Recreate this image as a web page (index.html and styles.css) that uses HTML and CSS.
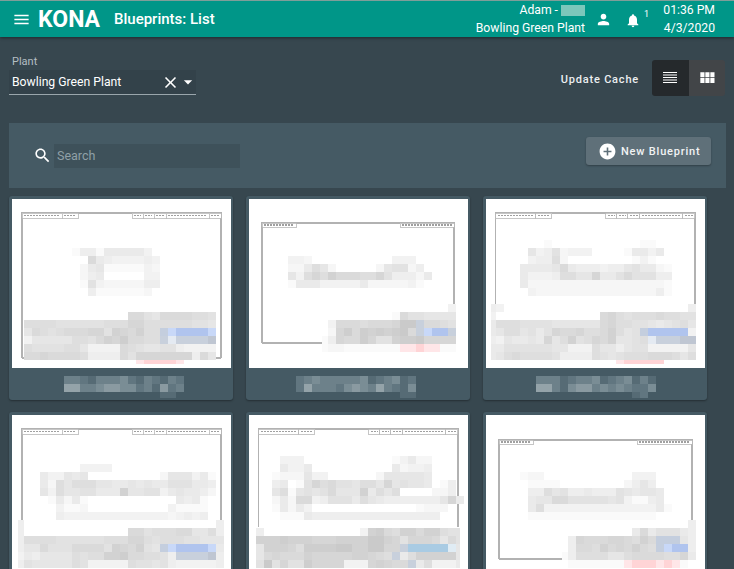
FILE: index.html
```html
<!DOCTYPE html>
<html lang="en">
<head>
<meta charset="utf-8">
<title>KONA Blueprints: List</title>
<link rel="stylesheet" href="styles.css">
</head>
<body>
<header class="appbar">
  <svg class="icon icon-menu" viewBox="0 0 24 24"><path d="M3 18h18v-2H3v2zm0-5h18v-2H3v2zm0-7v2h18V6H3z"/></svg>
  <span class="logo">KONA</span>
  <span class="page-title">Blueprints: List</span>
  <div class="user">
    <div class="user-name">Adam - <span class="redacted"></span></div>
    <div>Bowling Green Plant</div>
  </div>
  <svg class="icon icon-person" viewBox="0 0 24 24"><path d="M12 12c2.21 0 4-1.79 4-4s-1.79-4-4-4-4 1.79-4 4 1.79 4 4 4zm0 2c-2.67 0-8 1.34-8 4v2h16v-2c0-2.66-5.33-4-8-4z"/></svg>
  <div class="bell">
    <svg class="icon icon-bell" viewBox="0 0 24 24"><path d="M12 22c1.1 0 2-.9 2-2h-4c0 1.1.9 2 2 2zm6-6v-5c0-3.07-1.63-5.64-4.5-6.32V4c0-.83-.67-1.5-1.5-1.5s-1.5.67-1.5 1.5v.68C7.64 5.36 6 7.92 6 11v5l-2 2v1h16v-1l-2-2z"/></svg>
    <span class="bell-count">1</span>
  </div>
  <div class="clock">
    <div>01:36 PM</div>
    <div>4/3/2020</div>
  </div>
</header>

<main class="content">
  <section class="toolbar">
    <div class="plant">
      <label class="plant-label">Plant</label>
      <div class="plant-select">
        <span class="plant-value">Bowling Green Plant</span>
        <svg class="icon icon-close" viewBox="0 0 24 24"><path d="M19 6.41L17.59 5 12 10.59 6.41 5 5 6.41 10.59 12 5 17.59 6.41 19 12 13.41 17.59 19 19 17.59 13.41 12z"/></svg>
        <svg class="icon icon-caret" viewBox="0 0 24 24"><path d="M7 10l5 5 5-5z"/></svg>
      </div>
    </div>
    <span class="update-cache">Update Cache</span>
    <div class="toggle">
      <span class="toggle-btn toggle-active"><svg class="icon icon-list" viewBox="0 0 14 11"><path d="M0 0h14v1H0zM0 2.5h14v1H0zM0 5h14v1H0zM0 7.5h14v1H0zM0 10h14v1H0z"/></svg></span>
      <span class="toggle-btn"><svg class="icon icon-grid" viewBox="0 0 24 24"><path d="M4 11h5V5H4v6zm0 7h5v-6H4v6zm6 0h5v-6h-5v6zm6 0h5v-6h-5v6zm-6-7h5V5h-5v6zm6-6v6h5V5h-5z"/></svg></span>
    </div>
  </section>

  <section class="panel">
    <svg class="icon icon-search" viewBox="0 0 24 24"><path d="M15.5 14h-.79l-.28-.27C15.41 12.59 16 11.11 16 9.5 16 5.91 13.09 3 9.5 3S3 5.91 3 9.5 5.91 16 9.5 16c1.61 0 3.09-.59 4.23-1.57l.27.28v.79l5 4.99L20.49 19l-4.99-5zm-6 0C7.01 14 5 11.99 5 9.5S7.01 5 9.5 5 14 7.01 14 9.5 11.99 14 9.5 14z"/></svg>
    <div class="search-box">Search</div>
    <button class="new-btn" type="button">
      <svg class="icon icon-add" viewBox="0 0 24 24"><path d="M12 2C6.48 2 2 6.48 2 12s4.48 10 10 10 10-4.48 10-10S17.52 2 12 2zm5 11h-4v4h-2v-4H7v-2h4V7h2v4h4v2z"/></svg>
      New Blueprint
    </button>
  </section>

  <section class="grid" id="grid">
    <article class="card"><div class="card-image"></div><div class="card-title"></div></article>
    <article class="card"><div class="card-image"></div><div class="card-title"></div></article>
    <article class="card"><div class="card-image"></div><div class="card-title"></div></article>
    <article class="card"><div class="card-image"></div><div class="card-title"></div></article>
    <article class="card"><div class="card-image"></div><div class="card-title"></div></article>
    <article class="card"><div class="card-image"></div><div class="card-title"></div></article>
  </section>
</main>
<script src="script.js"></script>
</body>
</html>
```

FILE: styles.css
```css
* { box-sizing: border-box; }
html, body { height: 100%; overflow: hidden; }
body {
  margin: 0;
  background: #37474f;
  color: #fff;
  font-family: Roboto, "Liberation Sans", sans-serif;
}
.icon { display: block; fill: currentColor; flex: none; }

.appbar {
  display: flex;
  align-items: center;
  height: 37px;
  padding-left: 12px;
  background: #009688;
  border-top: 1px solid #7f9e99;
  box-shadow: 0 1px 3px rgba(0, 0, 0, .45);
  position: relative;
}
.icon-menu { width: 19px; height: 19px; }
.logo { margin-left: 7px; font-size: 23px; font-weight: 700; line-height: 1; }
.page-title { margin-left: 14px; font-size: 15px; font-weight: 500; }
.user { margin-left: auto; text-align: right; font-size: 12.2px; line-height: 18px; }
.user-name { display: flex; justify-content: flex-end; align-items: center; }
.redacted { width: 24px; height: 11px; margin-left: 3px; background: #7cc7bb; }
.icon-person { width: 17px; height: 17px; margin-left: 10px; }
.bell { display: flex; margin-left: 13px; width: 32px; }
.icon-bell { width: 16px; height: 17px; margin-top: 3px; }
.bell-count { margin-left: 3px; font-size: 9px; }
.clock { width: 58px; margin-right: 19px; text-align: right; font-size: 12.2px; line-height: 18px; }

.content { padding: 0 8px 0 9px; }

.toolbar { display: flex; align-items: center; height: 86px; padding-bottom: 5px; }
.plant { width: 187px; align-self: flex-start; margin-top: 18px; }
.plant-label { display: block; padding-left: 3px; font-size: 11px; line-height: 14px; color: #b4bec3; }
.plant-select {
  display: flex;
  align-items: center;
  height: 25px;
  margin-top: 1px;
  padding-left: 3px;
  background: #33424a;
  border-bottom: 1px solid #9aa6ac;
}
.plant-value { flex: 1; font-size: 12.2px; }
.icon-close { width: 19px; height: 19px; margin-right: -2px; }
.icon-caret { width: 20px; height: 20px; margin-right: -2px; }
.update-cache { margin: 3px 0 0 auto; font-size: 11px; font-weight: 500; letter-spacing: .8px; color: #eceff1; }
.toggle { display: flex; margin: 0 1px 0 13px; border-radius: 3px; overflow: hidden; }
.toggle-btn { display: flex; align-items: center; justify-content: center; width: 36.5px; height: 36px; background: #424548; }
.toggle-active { background: #25292c; }
.icon-list { width: 14px; height: 11px; }
.icon-grid { width: 20px; height: 20px; }

.panel {
  display: flex;
  align-items: center;
  height: 65px;
  padding: 0 15px 0 24px;
  background: #455a64;
}
.icon-search { width: 19px; height: 19px; color: #fff; }
.search-box {
  width: 186px;
  height: 24px;
  margin-left: 2px;
  padding-left: 3px;
  background: #3e515a;
  color: #90a0a7;
  font-size: 12.5px;
  line-height: 24px;
}
.new-btn {
  display: flex;
  align-items: center;
  gap: 4px;
  height: 28px;
  margin: -9px 0 0 auto;
  width: 125px;
  padding: 0 0 0 12px;
  border: 0;
  border-radius: 3px;
  background: #5f7079;
  box-shadow: 0 1px 2px rgba(0, 0, 0, .3);
  color: #f1f3f4;
  font: 500 11px Roboto, "Liberation Sans", sans-serif;
  letter-spacing: .8px;
}
.icon-add { width: 19px; height: 19px; color: #fff; }

.grid {
  display: grid;
  grid-template-columns: repeat(3, 224px);
  gap: 12px 13px;
  margin-top: 8px;
}
.card {
  position: relative;
  height: 204px;
  padding: 3px 2px 0 3px;
  background: #455a64;
  border-radius: 3px;
  box-shadow: 0 1px 2px rgba(0, 0, 0, .35);
}
.card-image { height: 169px; background: #fff; }
.card-art { position: absolute; inset: 0; width: 100%; height: 100%; display: block; }
```

FILE: script.js
```js
// The blueprint thumbnails and their titles are pixelated in the source; each
// mosaic is data on the page's 8px grid, in page coordinates.
var colours = {
  '0': '#bebebe', '1': '#c2c2c2', '2': '#c6c6c6', '3': '#cacaca', '4': '#cecece', '5': '#d2d2d2',
  '6': '#d6d6d6', '7': '#dadada', '8': '#dedede', '9': '#e2e2e2', a: '#e6e6e6', b: '#eaeaea',
  c: '#eeeeee', d: '#f2f2f2', e: '#f6f6f6', f: '#fafafa',
  B: '#b0c4ee', D: '#c8d8f8', H: '#c4cede', G: '#c8d0dc', Q: '#bfc6d2', L: '#e4eaf2',
  R: '#ffd4d6', P: '#ffe6e8', S: '#a9cbe3', T: '#e0ecf4',
  k: '#566b75', l: '#617680', m: '#6d818a', n: '#7a8d95', o: '#8a9aa1', p: '#94a3a9'
};

function m(x, y, rows, w, h) { return { x: x, y: y, rows: rows, w: w || 8, h: h || 8 }; }

var large = [[0, 40], [40, 56], [110, 121], [121, 132], [132, 144], [144, 187], [187, 199]];

var cards = [
  { x: 9, y: 196,
    frame: { x0: 22, y0: 213, x1: 221, y1: 358, cells: large, h: 5, bottom: 221, right: 358 },
    blocks: [
      m(72, 248, ['fccfbbbbbd', '..7bcddddcd']),
      m(80, 264, ['ebafffffde', 'ecb.....dd', 'f9deeeeecc', '.cffffffe']),
      m(128, 312, ['77 9a777788 9'.replace(/ /g, '')]),
      m(24, 320, ['88889999998886688888899a']),
      m(24, 328, ['a7898777669567588HDBBBBD']),
      m(24, 336, ['daaaaa88975647788GLGGGGQ']),
      m(24, 344, ['8999988adddd789aa99cdddd']),
      m(24, 352, ['77677778cccc796666666c7a']),
      m(136, 360, ['PRRRRP'], 8, 4)
    ],
    title: [m(64, 376, ['mmlkmmmnlkmlkml', 'ppmmnoonnlmkolm']), m(160, 392, ['kk'], 8, 6)] },

  { x: 246, y: 196,
    frame: { x0: 262, y0: 223, x1: 454, y1: 343, cells: [[0, 34], [138, 192]], h: 4, bottom: 322, right: 312 },
    blocks: [
      m(288, 256, ['dde..........ddd', 'eeb8ae.....ea99ec', 'ad86857778869ccceb', 'fbbbdddddbeeeeedf']),
      m(448, 304, ['d']),
      m(328, 312, ['........f799aaaa']),
      m(328, 320, ['d7778777633G7789']),
      m(328, 328, ['e6474545437GDBBG']),
      m(322, 336, ['f'], 6), m(328, 336, ['c677469954436666']),
      m(322, 344, ['f'], 6), m(328, 344, ['eefffffffPPRPPff'])
    ],
    title: [m(296, 376, ['lmnmmmmmnklmnkl', 'lpmmmlnonmpmlkn']), m(400, 392, ['kk'], 8, 6)] },

  { x: 483, y: 196,
    frame: { x0: 495.7, y0: 213, x1: 695, y1: 304, cells: large, h: 5, bottom: 0, right: 304 },
    blocks: [
      m(520, 240, ['...f...........ff', '.adc9eddd....fbbdb.', '.dcc8e........fdf', 'bbbba7bcccdcca9bbef', 'bdddc88aa6bb97999cc', 'beeeeeeeeeeeeeeeeef', '.deeeeeeeeeeeeeeecf']),
      m(491, 304, ['c', 'd'], 5), m(496, 304, ['d']), m(688, 304, ['c']),
      m(496, 312, ['.............768988878899']),
      m(491, 320, ['b', 'b', 'c', 'b', 'b'], 5),
      m(496, 320, ['8889999aaaaaa768899aba98a']),
      m(496, 328, ['a88a9b9677688758a9HBBBBBd']),
      m(496, 336, ['dabbab6a8598675aa98LGGGQQ']),
      m(496, 344, ['b999999aaddd8aaca99ddddda']),
      m(496, 352, ['a8788889cccc89a98887778a8']),
      m(616, 360, ['PRRRRR'], 8, 4)
    ],
    title: [m(536, 376, ['mmmklmmnklmnkmk', 'ppmknoomnmnmlln']), m(632, 392, ['kl'], 8, 6)] },

  { x: 9, y: 412,
    frame: { x0: 22, y0: 429, x1: 221, y1: 523, cells: large, h: 5, bottom: 0, right: 523 },
    blocks: [
      m(80, 464, ['dddd']),
      m(40, 472, ['bddaba.........eaaadbf']),
      m(40, 480, ['be8a888aabbababb999bbc']),
      m(40, 488, ['ad8aa99bbb5aa99dbabbce']),
      m(48, 496, ['fbebf...........bcbf']),
      m(56, 504, ['dffe..........dffff']),
      m(56, 512, ['cdddddddddddddedcdc']),
      m(18, 520, ['c', 'c', 'c', 'c', 'd', 'c'], 6),
      m(216, 520, ['c', 'c', 'a', 'b', 'c', 'c']),
      m(128, 528, ['77988877aa8']),
      m(24, 536, ['8888999999888668988899aa']),
      m(24, 544, ['aa79997777956759aHDBBBBD']),
      m(24, 552, ['bcaaaa89885547788 9cGGGGQ'.replace(' ', '')]),
      m(24, 560, ['9aaaaa89ddddd899a9cddddd'])
    ], title: [] },

  { x: 246, y: 412,
    frame: { x0: 258.7, y0: 429, x1: 458, y1: 527, cells: large, h: 5, bottom: 0, right: 527 },
    blocks: [
      m(272, 456, ['.ddd...........fdbee', '.bddb..........beddc', 'feeeadd......eaaaaab', 'cb.f968799a88a6a9aab.fc', 'a8fa9a97aaa5b8a8....eec', 'ebe77dc999b8abccccccca6b', 'fbebd.............feee.', '.fffbcccccccccccccccc.']),
      m(256, 528, ['c............d54785575589']),
      m(256, 536, ['55545556665555335696667a7']),
      m(256, 544, ['a55568444433553366GSSSSST']),
      m(256, 552, ['a7677756666655678Gb855555']),
      m(256, 560, ['93969946666ddd65677Gb8ddd']),
      m(456, 528, ['9', '9', 'a', 'a', 'b'], 4)
    ],
    title: [] },

  { x: 483, y: 412,
    frame: { x0: 499, y0: 440, x1: 692, y1: 559, cells: [[0, 34], [138, 193]], h: 4, bottom: 562, right: 524 },
    blocks: [
      m(520, 472, ['fee...........ddd', '.ffff........ecac', '.cc8a9ccbccc9abaab', '.baa7799999a9dffcb', '.b8ddddddddddddddbf', '.ffffffffffffffff']),
      m(688, 520, ['c']),
      m(568, 528, ['........b7b999bc']),
      m(568, 536, ['c6777667857HHHac']),
      m(568, 544, ['c7785767578HDBBc']),
      m(562, 552, ['f'], 6), m(568, 552, ['c8888aa87777886b']),
      m(568, 560, ['fffffffPRRRPRPf'])
    ], title: [] }
];

var NS = 'http://www.w3.org/2000/svg';

function el(name, attrs, parent) {
  var node = document.createElementNS(NS, name);
  for (var k in attrs) node.setAttribute(k, attrs[k]);
  parent.appendChild(node);
  return node;
}

function drawFrame(svg, f) {
  var g = el('g', { stroke: '#b2b2b2', 'stroke-width': 1.2, fill: 'none' }, svg);
  el('path', { d: 'M' + f.x0 + ' ' + f.y1 + 'V' + f.y0 + 'H' + f.x1 + 'V' + f.right }, g);
  if (f.bottom) el('path', { d: 'M' + f.x0 + ' ' + f.y1 + 'H' + f.bottom }, g);
  f.cells.forEach(function (c) {
    var a = f.x0 + c[0], b = f.x0 + c[1];
    el('rect', { x: a, y: f.y0, width: b - a, height: f.h, fill: '#fff', stroke: '#b8b8b8', 'stroke-width': 0.8 }, svg);
    el('path', { d: 'M' + (a + 2) + ' ' + (f.y0 + f.h / 2) + 'H' + (b - 2), stroke: '#a0a0a0', 'stroke-width': 1.2, 'stroke-dasharray': '2 1' }, svg);
  });
}

function drawBlock(svg, b) {
  b.rows.forEach(function (row, r) {
    row.split('').forEach(function (ch, c) {
      if (!colours[ch]) return;
      el('rect', { x: b.x + c * b.w, y: b.y + r * b.h, width: b.w, height: b.h, fill: colours[ch] }, svg);
    });
  });
}

var nodes = document.querySelectorAll('.card');
cards.forEach(function (card, i) {
  var svg = el('svg', { 'class': 'card-art', viewBox: card.x + ' ' + card.y + ' 224 204', 'shape-rendering': 'crispEdges' }, nodes[i]);
  drawFrame(svg, card.frame);
  card.blocks.concat(card.title).forEach(function (b) { drawBlock(svg, b); });
});
```
